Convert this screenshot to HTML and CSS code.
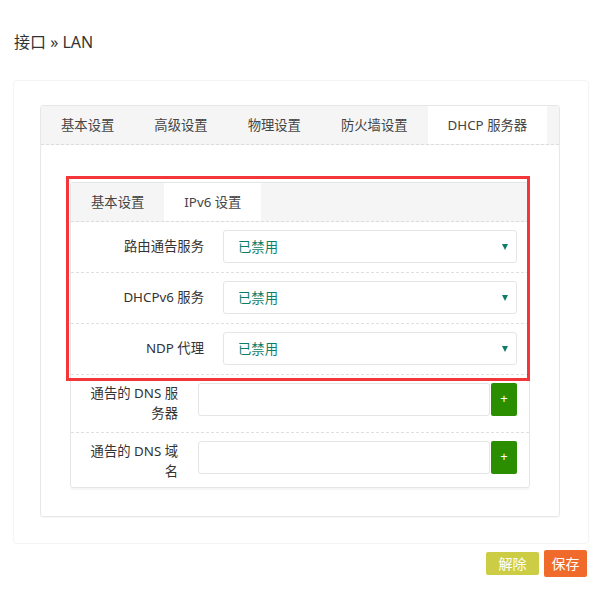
FILE: index.html
```html
<!DOCTYPE html>
<html lang="zh">
<head>
<meta charset="utf-8">
<title>接口 - LAN</title>
<link rel="stylesheet" href="styles.css">
</head>
<body>
<h2 class="title">接口 » LAN</h2>
<div class="outer">
  <div class="card">
    <ul class="tabs">
      <li class="tab">基本设置</li>
      <li class="tab">高级设置</li>
      <li class="tab">物理设置</li>
      <li class="tab">防火墙设置</li>
      <li class="tab active">DHCP 服务器</li>
    </ul>
    <div class="card-body">
      <div class="section">
        <div class="highlight"></div>
        <ul class="tabs sub">
          <li class="tab">基本设置</li>
          <li class="tab active">IPv6 设置</li>
        </ul>
        <div class="row">
          <div class="label">路由通告服务</div>
          <div class="select"><span>已禁用</span><i class="caret"></i></div>
        </div>
        <div class="row">
          <div class="label">DHCPv6 服务</div>
          <div class="select"><span>已禁用</span><i class="caret"></i></div>
        </div>
        <div class="row">
          <div class="label">NDP 代理</div>
          <div class="select"><span>已禁用</span><i class="caret"></i></div>
        </div>
        <div class="row list">
          <div class="label">通告的 DNS 服务器</div>
          <div class="input"></div>
          <div class="add">+</div>
        </div>
        <div class="row list last">
          <div class="label">通告的 DNS 域名</div>
          <div class="input"></div>
          <div class="add">+</div>
        </div>
      </div>
    </div>
  </div>
</div>
<div class="actions">
  <button class="btn reset">解除</button>
  <button class="btn save">保存</button>
</div>
</body>
</html>
```

FILE: styles.css
```css
html, body {
  margin: 0;
  padding: 0;
  background: #fff;
}
body {
  font-family: "Noto Sans", "Noto Sans CJK SC", sans-serif;
  font-size: 13.33px;
  color: #333;
  width: 597px;
}
.title {
  margin: 32px 0 0 14px;
  font-size: 16px;
  line-height: 20px;
  font-weight: normal;
  color: #333;
}
.outer {
  box-sizing: border-box;
  margin: 28px 0 0 13px;
  width: 576px;
  border: 1px solid #f4f4f4;
  border-radius: 4px;
  padding: 24px 28px 26px 26px;
}
.card {
  border: 1px solid #e6e8e8;
  border-radius: 3px;
  box-shadow: 0 1px 1px rgba(0,0,0,0.03);
}
.tabs {
  list-style: none;
  margin: 0;
  padding: 0;
  display: flex;
  background: #f5f5f5;
  border-bottom: 1px dashed #dcdcdc;
  height: 38px;
}
.tab {
  padding: 0 20px;
  line-height: 38px;
  color: #444;
  white-space: nowrap;
}
.tab.active {
  background: #fff;
}
.card-body {
  padding: 37px 29px 28px 29px;
}
.section {
  position: relative;
  border: 1px solid #e3e6e6;
  border-radius: 3px;
  box-shadow: 0 2px 1px rgba(0,0,0,0.04);
}
.highlight {
  position: absolute;
  left: -5px;
  top: -7px;
  width: 464px;
  height: 205px;
  box-sizing: border-box;
  border: 3px solid #f3363a;
  pointer-events: none;
}
.row {
  display: flex;
  align-items: flex-start;
  padding: 8px 12px 9px 0;
  border-bottom: 1px dashed #e0e0e0;
}
.row.last {
  border-bottom: none;
  padding-bottom: 6px;
}
.label {
  width: 133px;
  margin-right: 19px;
  text-align: right;
  line-height: 33px;
  color: #333;
}
.select {
  flex: 1;
  box-sizing: border-box;
  height: 33px;
  border: 1px solid #e3e6e6;
  border-radius: 3px;
  display: flex;
  align-items: center;
  justify-content: space-between;
  padding: 0 5px 0 14px;
  color: #0c7d69;
}
.caret {
  width: 0;
  height: 0;
  border-left: 3px solid transparent;
  border-right: 3px solid transparent;
  border-top: 6px solid #0c7d69;
  margin-right: 3px;
}
.row.list .label {
  width: 92px;
  margin-left: 15px;
  margin-right: 20px;
  line-height: 20px;
}
.input {
  flex: 1;
  box-sizing: border-box;
  height: 33px;
  border: 1px solid #e3e6e6;
  border-radius: 3px;
  margin-right: 1px;
}
.add {
  width: 26px;
  height: 33px;
  background: #2a8e00;
  border-radius: 2px;
  color: #fff;
  text-align: center;
  line-height: 31px;
  font-size: 13px;
}
.actions {
  display: flex;
  justify-content: flex-end;
  align-items: center;
  gap: 5px;
  padding: 6px 10px 0 0;
}
.btn {
  border: none;
  color: #fff;
  font-family: "Noto Sans CJK SC", sans-serif;
  font-size: 14px;
  border-radius: 2px;
  padding: 0;
}
.btn.reset {
  background: #cccc45;
  width: 53px;
  height: 23px;
  line-height: 23px;
}
.btn.save {
  background: #f06b2b;
  width: 43px;
  height: 27px;
  line-height: 27px;
}
```
